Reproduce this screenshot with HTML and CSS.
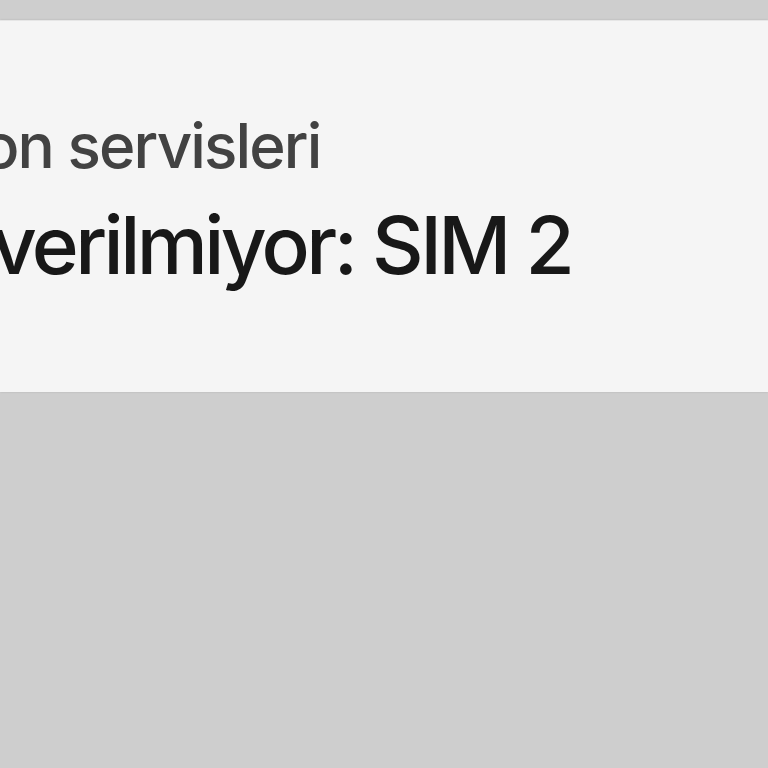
FILE: index.html
```html
<!DOCTYPE html>
<html>
<head>
<meta charset="utf-8">
<link rel="stylesheet" href="styles.css">
</head>
<body>
<div class="screen">
  <div class="panel">
    <div class="text">
      <div class="sub">on servisleri</div>
      <div class="title">verilmiyor: SIM 2</div>
    </div>
  </div>
</div>
</body>
</html>
```
FILE: styles.css
```css
html, body {
  margin: 0;
  padding: 0;
  background: #cecece;
  width: 768px;
  height: 768px;
  overflow: hidden;
}
.screen {
  padding-top: 20px;
}
.panel {
  height: 372px;
  background: #f5f5f5;
  overflow: hidden;
  box-shadow: 0 0 2px rgba(0,0,0,0.12);
  border-top: 1px solid #e6e6e6;
  box-sizing: border-box;
}
.text {
  font-family: Inter, "Noto Sans", sans-serif;
  padding-top: 89px;
}
.sub {
  font-size: 62px;
  line-height: 72px;
  color: #424242;
  font-weight: 550;
  letter-spacing: -1.9px;
  margin-left: -18px;
  white-space: nowrap;
}
.title {
  font-size: 80px;
  line-height: 126px;
  color: #181818;
  font-weight: 550;
  letter-spacing: -3.6px;
  margin-left: -9px;
  white-space: nowrap;
}
```
